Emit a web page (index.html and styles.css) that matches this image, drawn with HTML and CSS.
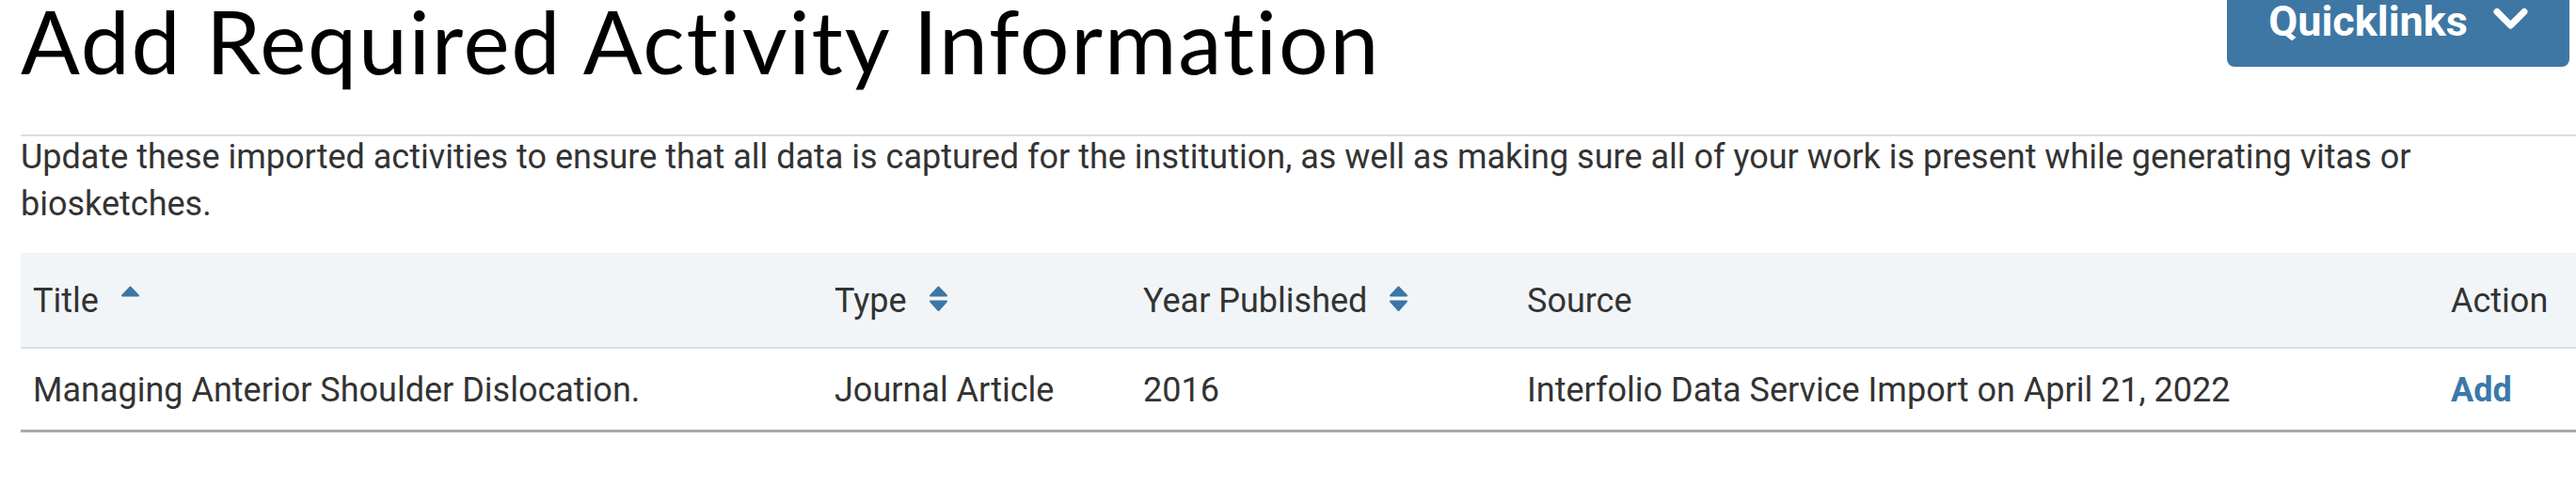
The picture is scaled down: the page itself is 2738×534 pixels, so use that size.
FILE: index.html
```html
<!DOCTYPE html>
<html lang="en">
<head>
<meta charset="utf-8">
<title>Add Required Activity Information</title>
<link rel="stylesheet" href="styles.css">
</head>
<body>
<div class="page">
  <header class="page-header">
    <h1 class="page-title">Add Required Activity Information</h1>
    <button class="quicklinks" type="button">
      <span>Quicklinks</span>
      <svg class="chev" width="37" height="24" viewBox="0 0 37 24" aria-hidden="true"><path d="M4 4.5 L18.5 19 L33 4.5" fill="none" stroke="#fff" stroke-width="7" stroke-linecap="round" stroke-linejoin="round"/></svg>
    </button>
  </header>
  <p class="intro">Update these imported activities to ensure that all data is captured for the institution, as well as making sure all of your work is present while generating vitas or biosketches.</p>
  <table class="activities">
    <colgroup>
      <col class="c-title"><col class="c-type"><col class="c-year"><col class="c-source"><col class="c-action">
    </colgroup>
    <thead>
      <tr>
        <th><span class="th-label">Title</span><svg class="sort" width="21" height="30" viewBox="0 0 21 30" aria-hidden="true"><path d="M2 11.5 L10.5 2.5 L19 11.5 Z" fill="#3c76a4" stroke="#3c76a4" stroke-width="2" stroke-linejoin="round"/></svg></th>
        <th><span class="th-label">Type</span><svg class="sort" width="21" height="30" viewBox="0 0 21 30" aria-hidden="true"><path d="M2 11.5 L10.5 2.5 L19 11.5 Z" fill="#3c76a4" stroke="#3c76a4" stroke-width="2" stroke-linejoin="round"/><path d="M2 17.5 L10.5 27 L19 17.5 Z" fill="#3c76a4" stroke="#3c76a4" stroke-width="2" stroke-linejoin="round"/></svg></th>
        <th><span class="th-label">Year Published</span><svg class="sort" width="21" height="30" viewBox="0 0 21 30" aria-hidden="true"><path d="M2 11.5 L10.5 2.5 L19 11.5 Z" fill="#3c76a4" stroke="#3c76a4" stroke-width="2" stroke-linejoin="round"/><path d="M2 17.5 L10.5 27 L19 17.5 Z" fill="#3c76a4" stroke="#3c76a4" stroke-width="2" stroke-linejoin="round"/></svg></th>
        <th><span class="th-label">Source</span></th>
        <th><span class="th-label">Action</span></th>
      </tr>
    </thead>
    <tbody>
      <tr>
        <td>Managing Anterior Shoulder Dislocation.</td>
        <td>Journal Article</td>
        <td>2016</td>
        <td>Interfolio Data Service Import on April 21, 2022</td>
        <td><a class="add-link" href="#">Add</a></td>
      </tr>
    </tbody>
  </table>
</div>
</body>
</html>
```
FILE: styles.css
```css
html, body {
  margin: 0;
  padding: 0;
  background: #fff;
  overflow: hidden;
}

body {
  font-family: Roboto, "Liberation Sans", Arial, sans-serif;
  color: #333;
}

.page {
  padding-left: 22px;
}

.page-header {
  display: flex;
  justify-content: space-between;
  align-items: flex-start;
  margin-top: -28px;
  border-bottom: 2px solid #dddddd;
}

.page-title {
  margin: 31px 0 60px;
  font-family: Lato, "Open Sans", sans-serif;
  font-weight: 400;
  font-size: 93px;
  letter-spacing: 1.8px;
  line-height: 80px;
  color: #000;
}

.quicklinks {
  display: flex;
  align-items: center;
  gap: 27px;
  margin-right: 7px;
  padding: 25px 44px 22px;
  border: 0;
  border-radius: 8px;
  background: #3e77a4;
  color: #fff;
  font-family: Roboto, "Liberation Sans", sans-serif;
  font-weight: 700;
  font-size: 45px;
  line-height: 52px;
}

.chev {
  display: block;
  margin-top: -6px;
}

.intro {
  margin: -3px 0 0;
  font-size: 36px;
  line-height: 50px;
  color: #333;
}

.activities {
  width: 100%;
  margin-top: 27px;
  border-collapse: collapse;
  table-layout: fixed;
  font-size: 36px;
  line-height: 50px;
}

.c-title { width: 852px; }
.c-type { width: 328px; }
.c-year { width: 408px; }
.c-source { width: 982px; }
.c-action { width: 146px; }

.activities th {
  text-align: left;
  font-weight: 400;
  background: #f1f5f8;
  padding: 24px 13px 24px;
  border-bottom: 2px solid #dddddd;
  white-space: nowrap;
}

.th-label {
  vertical-align: middle;
}

.sort {
  display: inline-block;
  vertical-align: middle;
  margin-left: 23px;
  margin-top: -4px;
}

.activities td {
  padding: 19px 13px 17px;
  border-bottom: 3px solid #aaaaaa;
  white-space: nowrap;
}

.add-link {
  color: #3c78a8;
  font-weight: 700;
  text-decoration: none;
}
```
